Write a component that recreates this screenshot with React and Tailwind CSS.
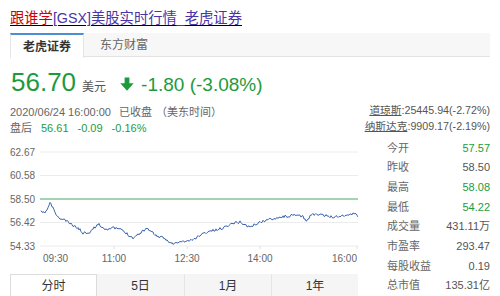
import React from 'react';

const font = { fontFamily: '"Liberation Sans", "Noto Sans CJK SC", sans-serif' };

// key points of the intraday line, chart-local coords (chart svg sits at page x 10, y 135)
const keyPoints = [
    [31, 72], [34, 73], [37, 70], [40, 63], [43, 68], [48, 78], [55, 80], [62, 85], [68, 88],
    [73, 93], [80, 92], [88, 84], [95, 89], [103, 88], [110, 89], [116, 93], [123, 98],
    [130, 93], [137, 88], [143, 93], [147, 96], [155, 99], [163, 104], [170, 102], [177, 101],
    [183, 100], [190, 95], [200, 91], [207, 90], [215, 87], [223, 83], [230, 82], [235, 85],
    [240, 87], [248, 83], [257, 80], [265, 78], [270, 77], [280, 76], [287, 75], [293, 77],
    [297, 81], [300, 76], [303, 74], [310, 75], [317, 76], [323, 77], [330, 76], [337, 75],
    [343, 74], [346, 73], [348, 77],
];

function buildLine() {
    let seed = 11;
    const rand = () => {
        seed = (seed * 16807) % 2147483647;
        return seed / 2147483647;
    };
    const out = [];
    for (let i = 0; i < keyPoints.length - 1; i++) {
        const [x0, y0] = keyPoints[i];
        const [x1, y1] = keyPoints[i + 1];
        for (let x = x0; x < x1; x += 1) {
            const t = (x - x0) / (x1 - x0);
            const y = y0 + (y1 - y0) * t + (rand() - 0.5) * 2.6;
            out.push(`${x},${y.toFixed(1)}`);
        }
    }
    const last = keyPoints[keyPoints.length - 1];
    out.push(`${last[0]},${last[1]}`);
    return out.join(' ');
}

const linePoints = buildLine();

const gridRows = [
    { y: 12, label: '62.67' },
    { y: 35.5, label: '60.58' },
    { y: 59, label: '58.50' },
    { y: 82.5, label: '56.42' },
    { y: 106, label: '54.33' },
];

function Chart() {
    return (
        <svg width="348" height="126" className="block mt-[4px]" style={font}>
            {gridRows.map((r) => (
                <g key={r.label}>
                    <line x1="30" x2="348" y1={r.y} y2={r.y} stroke="#ececec" strokeWidth="1" />
                    <text x="0" y={r.y + 3.5} fontSize="10" fill="#666">
                        {r.label}
                    </text>
                </g>
            ))}
            <line x1="30" x2="348" y1="59" y2="59" stroke="#86c99c" strokeWidth="1.6" />
            {[104, 177, 250, 347].map((x) => (
                <line key={x} x1={x} x2={x} y1="106" y2="109" stroke="#e2e2e2" strokeWidth="1" />
            ))}
            <polyline points={linePoints} fill="none" stroke="#3d67ae" strokeWidth="1" strokeLinejoin="round" />
            <g fontSize="10" fill="#666">
                <text x="33" y="121.5">09:30</text>
                <text x="104" y="121.5" textAnchor="middle">11:00</text>
                <text x="177" y="121.5" textAnchor="middle">12:30</text>
                <text x="250" y="121.5" textAnchor="middle">14:00</text>
                <text x="347" y="121.5" textAnchor="end">16:00</text>
            </g>
        </svg>
    );
}

const stats = [
    { label: '今开', value: '57.57', green: true },
    { label: '昨收', value: '58.50' },
    { label: '最高', value: '58.08', green: true },
    { label: '最低', value: '54.22', green: true },
    { label: '成交量', value: '431.11万' },
    { label: '市盈率', value: '293.47' },
    { label: '每股收益', value: '0.19' },
    { label: '总市值', value: '135.31亿' },
];

function DownArrow() {
    return (
        <svg width="14" height="14" viewBox="0 0 14 14" className="ml-[14px] mr-[7px]">
            <rect x="4.6" y="0.5" width="4.8" height="7" fill="#1d9b3c" />
            <polygon points="0.3,6.2 13.7,6.2 7,13.8" fill="#1d9b3c" />
        </svg>
    );
}

export default function App() {
    return (
        <div className="w-[500px] h-[296px] bg-white overflow-hidden px-[10px]" style={font}>
            <div className="pt-[8px] text-[14.3px] leading-[20px] underline underline-offset-[2px] whitespace-nowrap">
                <span className="text-[#cc0000]">跟谁学</span>
                <span className="text-[#4a33a6]">[GSX]美股实时行情_老虎证券</span>
            </div>

            <div className="mt-[5px] flex h-[24px] bg-[#f7f7f7] border-b border-[#e3e3e3] text-[12px]">
                <div className="w-[74px] h-[25px] bg-white border-t-2 border-t-[#4a8fd6] border-x border-x-[#e6e6e6] flex items-center justify-center font-bold text-[#333]">
                    老虎证券
                </div>
                <div className="pl-[16px] flex items-center text-[#666]">东方财富</div>
            </div>

            <div className="flex">
                <div className="w-[348px]">
                    <div className="mt-[10px] flex items-baseline leading-[30px] text-[#1d9b3c] whitespace-nowrap">
                        <span className="text-[26px] ml-[1px]">56.70</span>
                        <span className="text-[12px] ml-[6px] text-[#555]">美元</span>
                        <DownArrow />
                        <span className="text-[19px]">-1.80 (-3.08%)</span>
                    </div>
                    <div className="mt-[2px] text-[11px] leading-[16px] text-[#666] whitespace-nowrap">
                        <span>2020/06/24 16:00:00</span>
                        <span className="ml-[8px]">已收盘</span>
                        <span className="ml-[4px]">（美东时间）</span>
                    </div>
                    <div className="text-[11px] leading-[16px] whitespace-nowrap">
                        <span className="text-[#666]">盘后</span>
                        <span className="ml-[9px] text-[#1d9b3c]">56.61</span>
                        <span className="ml-[9px] text-[#1d9b3c]">-0.09</span>
                        <span className="ml-[9px] text-[#1d9b3c]">-0.16%</span>
                    </div>
                    <Chart />
                    <div className="mt-[8px] grid grid-cols-4 h-[24px] bg-[#f5f5f5] text-[12px] text-[#333]">
                        <div className="bg-white border border-[#dcdcdc] flex items-center justify-center">分时</div>
                        <div className="flex items-center justify-center">5日</div>
                        <div className="border-l border-[#e6e6e6] flex items-center justify-center">1月</div>
                        <div className="border-l border-[#e6e6e6] flex items-center justify-center">1年</div>
                    </div>
                </div>

                <div className="flex-1 pt-[45px]">
                    <div className="text-right text-[10.7px] leading-[16px] text-[#555] whitespace-nowrap">
                        <div>
                            <span className="underline">道琼斯</span>:25445.94(-2.72%)
                        </div>
                        <div>
                            <span className="underline">纳斯达克</span>:9909.17(-2.19%)
                        </div>
                    </div>
                    <div className="mt-[4px] pl-[29px] text-[11px]">
                        {stats.map((s) => (
                            <div key={s.label} className="h-[19.7px] flex items-center justify-between">
                                <span className="text-[#666]">{s.label}</span>
                                <span className={s.green ? 'text-[#1d9b3c]' : 'text-[#555]'}>{s.value}</span>
                            </div>
                        ))}
                    </div>
                </div>
            </div>
        </div>
    );
}
